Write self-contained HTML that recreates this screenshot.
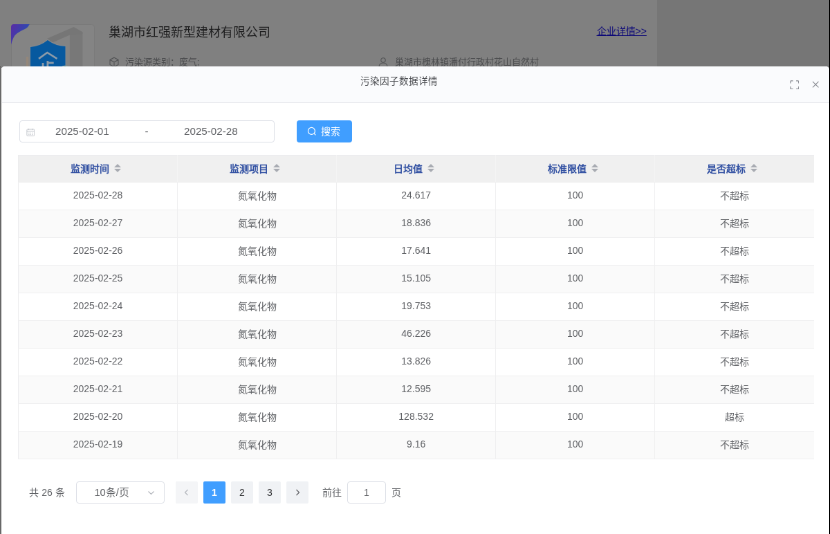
<!DOCTYPE html>
<html lang="zh-CN">
<head>
<meta charset="utf-8">
<title>污染因子数据详情</title>
<style>
*{box-sizing:border-box;margin:0;padding:0}
html,body{width:830px;height:534px;overflow:hidden;background:#808080}
body{font-family:"Liberation Sans",sans-serif;color:#606266;position:relative}
#stage{position:absolute;left:0;top:0;width:1200px;height:772px;transform:scale(0.691667);transform-origin:0 0;background:#808080;overflow:hidden;will-change:transform}
/* ---------- background page (dimmed) ---------- */
.bg-right{position:absolute;left:950px;top:0;width:250px;height:120px;background:#767676}
.bg-img{position:absolute;left:15.6px;top:34.5px;width:121px;height:120px;overflow:hidden}
.bg-title{position:absolute;left:156.5px;top:35.3px;font-size:18px;line-height:24px;color:#1c1c1d;white-space:nowrap}
.bg-sub{position:absolute;top:80px;font-size:13px;line-height:20px;color:#4b4c4e;white-space:nowrap}
.bg-link{position:absolute;left:862.5px;top:35px;font-size:14px;line-height:20px;color:#0d0978;font-weight:500;text-decoration:underline;text-decoration-thickness:1px;white-space:nowrap}
.eg{position:absolute;width:1px;z-index:5}
/* ---------- dialog ---------- */
.dlg{position:absolute;left:2.4px;top:95.6px;width:1196.8px;height:690px;background:#fff;border-radius:5px 5px 0 0;overflow:hidden}
.dlg-h{position:absolute;left:0;top:0;width:100%;height:53.6px;background:#fafbfd;border-bottom:1px solid #e4e6ea}
.dlg-t{position:absolute;left:519px;top:12.4px;font-size:13.6px;line-height:20px;color:#4a4c50;white-space:nowrap}
.ico{position:absolute}
/* search row */
.date{position:absolute;left:25.5px;top:78.7px;width:369px;height:32px;border:1px solid #dcdfe6;border-radius:4px;background:#fff}
.date span{position:absolute;top:0;line-height:30px;font-size:15.2px;color:#606266;white-space:nowrap}
.btn{position:absolute;left:427px;top:78.7px;width:80px;height:32px;border-radius:4px;background:#409eff;color:#fff;font-size:14px;line-height:32px}
.btn span{position:absolute;left:35px;top:0;white-space:nowrap}
/* table */
table{position:absolute;left:23.7px;top:128.3px;width:1150.6px;border-left:1px solid #ececee;border-top:1px solid #ececee;border-collapse:collapse;table-layout:fixed;font-size:14px}
th,td{text-align:center;border-bottom:1px solid #efeff0;border-right:1px solid #efeff0;white-space:nowrap;overflow:hidden}
th:last-child,td:last-child{border-right:none}
th{height:38.7px;padding-bottom:1.4px;background:#f0f0f0;border-right-color:#f4f4f4;border-bottom-color:#f0f0f0;color:#3150a2;font-weight:bold;font-size:14px}
td{height:40px;color:#606266;background:#fff;padding-bottom:1.8px}
tr:nth-child(odd) td{background:#fafafa}
.car{display:inline-block;position:relative;width:24px;height:14px;vertical-align:-1.8px}
.car:before,.car:after{content:"";position:absolute;left:7px;border:5px solid transparent}
.car:before{top:-5px;border-bottom-color:#a8abb2}
.car:after{top:7px;border-top-color:#a8abb2}
/* pagination */
.pg{position:absolute;left:40px;top:600.2px;height:32px;font-size:14px;color:#606266;line-height:32px;white-space:nowrap}
.pg > *{position:absolute;top:0;height:32px}
.pb{width:32px;border-radius:2px;background:#f0f2f5;text-align:center;color:#303133;font-size:14px}
.pb.on{background:#409eff;color:#fff;font-weight:bold}
.sel{border:1px solid #dcdfe6;border-radius:4px;width:128px}
.inp{border:1px solid #dcdfe6;border-radius:4px;width:56px;text-align:center}
</style>
</head>
<body>
<div id="stage">
  <div class="bg-right"></div>
  <div class="bg-img">
    <svg width="121" height="120" viewBox="0 0 121 120">
      <defs><linearGradient id="rb" x1="0" y1="0" x2="1" y2="0.5"><stop offset="0" stop-color="#5a2ba4"/><stop offset="1" stop-color="#2450b2"/></linearGradient></defs>
      <rect x="0.5" y="0.5" width="120" height="119" rx="4" fill="#848484" stroke="#7a7a7a"/>
      <polygon points="84.9,14 103.4,11.2 103.4,120 84.9,120" fill="#787878"/>
      <polygon points="52.1,20.8 90.6,4 103.4,11.2 103.4,14 84.9,15.5 60.1,26.5" fill="#767676"/>
      <rect x="21.8" y="47" width="3.4" height="20" fill="#94877a"/>
      <path d="M28 33 Q43 31.5 52.9 23 Q64 31.5 78.5 32 V120 H28 Z" fill="#8f9499" stroke="#8f9499" stroke-width="1.6" opacity="0.55"/>
      <path d="M28 33 Q43 31.5 52.9 23 Q64 31.5 78.5 32 V120 H28 Z" fill="#07599f"/>
      <path d="M40 49.9 L52.3 41 L66.5 49.9" fill="none" stroke="#8e9ba8" stroke-width="2.6"/>
      <path d="M52.9 53 V70 M46.1 56 V70 M53 55.8 H61.7" fill="none" stroke="#8e9ba8" stroke-width="2.8"/>
      <circle cx="78" cy="68" r="8" fill="#0f7a78" stroke="#8a9a9a" stroke-width="1.2"/>
      <path d="M0 4 Q0 0 4 0 H26.8 C25 3 24 5 20 7 C14 10 9 12 5.4 16.3 C3 20 1.5 24 0 29.7 Z" fill="url(#rb)"/>
    </svg>
  </div>
  <div class="bg-title">巢湖市红强新型建材有限公司</div>
  <svg class="ico" style="left:157px;top:82px" width="16" height="16" viewBox="0 0 16 16" fill="none" stroke="#505153" stroke-width="1.1"><path d="M8 1.2 14 4.4 V11.4 L8 14.8 2 11.4 V4.4 Z M2 4.4 8 7.8 14 4.4 M8 7.8 V14.8"/></svg>
  <div class="bg-sub" style="left:180.8px">污染源类别：废气;</div>
  <svg class="ico" style="left:546px;top:82px" width="16" height="16" viewBox="0 0 16 16" fill="none" stroke="#505153" stroke-width="1.1"><circle cx="8" cy="5" r="3.2"/><path d="M2 15 C2 10.5 5 9 8 9 C11 9 14 10.5 14 15 Z"/></svg>
  <div class="bg-sub" style="left:571px">巢湖市槐林镇潘付行政村花山自然村</div>
  <div class="bg-link">企业详情&gt;&gt;</div>

  <div class="dlg">
    <div class="dlg-h">
      <div class="dlg-t">污染因子数据详情</div>
      <svg class="ico" style="left:1139.5px;top:20.1px" width="13.6" height="13.6" viewBox="0 0 15 15" fill="none" stroke="#85888f" stroke-width="1.3"><path d="M1 5 V2 Q1 1 2 1 H5 M10 1 H13 Q14 1 14 2 V5 M14 10 V13 Q14 14 13 14 H10 M5 14 H2 Q1 14 1 13 V10"/></svg>
      <svg class="ico" style="left:1172px;top:21.2px" width="10.4" height="10.4" viewBox="0 0 11 11" fill="none" stroke="#85888f" stroke-width="1.2"><path d="M1 1 10 10 M10 1 1 10"/></svg>
    </div>
    <div class="date">
      <svg class="ico" style="left:9px;top:9.4px" width="12.6" height="12.6" viewBox="0 0 14 14" fill="none" stroke="#c0c3c9" stroke-width="1.1"><rect x="1" y="2.2" width="12" height="10.6" rx="1"/><path d="M1 5.4 H13 M4 1 V3.4 M10 1 V3.4 M3.5 8 H5 M6.3 8 H7.8 M9 8 H10.5 M3.5 10.4 H5 M6.3 10.4 H7.8 M9 10.4 H10.5"/></svg>
      <span style="left:51.1px">2025-02-01</span>
      <span style="left:180.5px">-</span>
      <span style="left:237.1px">2025-02-28</span>
    </div>
    <div class="btn">
      <svg class="ico" style="left:15px;top:9px" width="14" height="14" viewBox="0 0 14 14" fill="none" stroke="#fff" stroke-width="1.2"><circle cx="6.4" cy="6.4" r="5"/><path d="M10.2 10.2 12.4 12.4"/></svg>
      <span>搜索</span>
    </div>
    <table>
      <tr><th>监测时间<i class="car"></i></th><th>监测项目<i class="car"></i></th><th>日均值<i class="car"></i></th><th>标准限值<i class="car"></i></th><th>是否超标<i class="car"></i></th></tr>
      <tr><td>2025-02-28</td><td>氮氧化物</td><td>24.617</td><td>100</td><td>不超标</td></tr>
      <tr><td>2025-02-27</td><td>氮氧化物</td><td>18.836</td><td>100</td><td>不超标</td></tr>
      <tr><td>2025-02-26</td><td>氮氧化物</td><td>17.641</td><td>100</td><td>不超标</td></tr>
      <tr><td>2025-02-25</td><td>氮氧化物</td><td>15.105</td><td>100</td><td>不超标</td></tr>
      <tr><td>2025-02-24</td><td>氮氧化物</td><td>19.753</td><td>100</td><td>不超标</td></tr>
      <tr><td>2025-02-23</td><td>氮氧化物</td><td>46.226</td><td>100</td><td>不超标</td></tr>
      <tr><td>2025-02-22</td><td>氮氧化物</td><td>13.826</td><td>100</td><td>不超标</td></tr>
      <tr><td>2025-02-21</td><td>氮氧化物</td><td>12.595</td><td>100</td><td>不超标</td></tr>
      <tr><td>2025-02-20</td><td>氮氧化物</td><td>128.532</td><td>100</td><td>超标</td></tr>
      <tr><td>2025-02-19</td><td>氮氧化物</td><td>9.16</td><td>100</td><td>不超标</td></tr>
    </table>
    <div class="pg">
      <span style="left:0">共 26 条</span>
      <div class="sel" style="left:67.5px"><span style="position:absolute;left:25.5px;top:-1px;font-size:14.8px">10条/页</span>
        <svg class="ico" style="left:101px;top:9px" width="13" height="13" viewBox="0 0 13 13" fill="none" stroke="#b0b3ba" stroke-width="1.1"><path d="M2.5 4.5 6.5 8.5 10.5 4.5"/></svg></div>
      <div class="pb" style="left:211.5px;background:#f4f5f7"><svg class="ico" style="left:10px;top:10px" width="12" height="12" viewBox="0 0 12 12" fill="none" stroke="#b4b7bd" stroke-width="1.2"><path d="M7.5 2 3.5 6 7.5 10"/></svg></div>
      <div class="pb on" style="left:251.5px">1</div>
      <div class="pb" style="left:291.5px">2</div>
      <div class="pb" style="left:331.5px">3</div>
      <div class="pb" style="left:371.5px"><svg class="ico" style="left:10px;top:10px" width="12" height="12" viewBox="0 0 12 12" fill="none" stroke="#606266" stroke-width="1.2"><path d="M4.5 2 8.5 6 4.5 10"/></svg></div>
      <span style="left:423.5px">前往</span>
      <div class="inp" style="left:459.5px"><span style="position:relative;top:-1px">1</span></div>
      <span style="left:523.5px">页</span>
    </div>
  </div>
</div>
<div class="eg" style="left:0;top:66px;height:468px;background:#686868"></div>
<div class="eg" style="left:1px;top:68px;height:466px;background:#cdcdcd"></div>
<div class="eg" style="left:829px;top:0;height:534px;background:#000"></div>
</body>
</html>
